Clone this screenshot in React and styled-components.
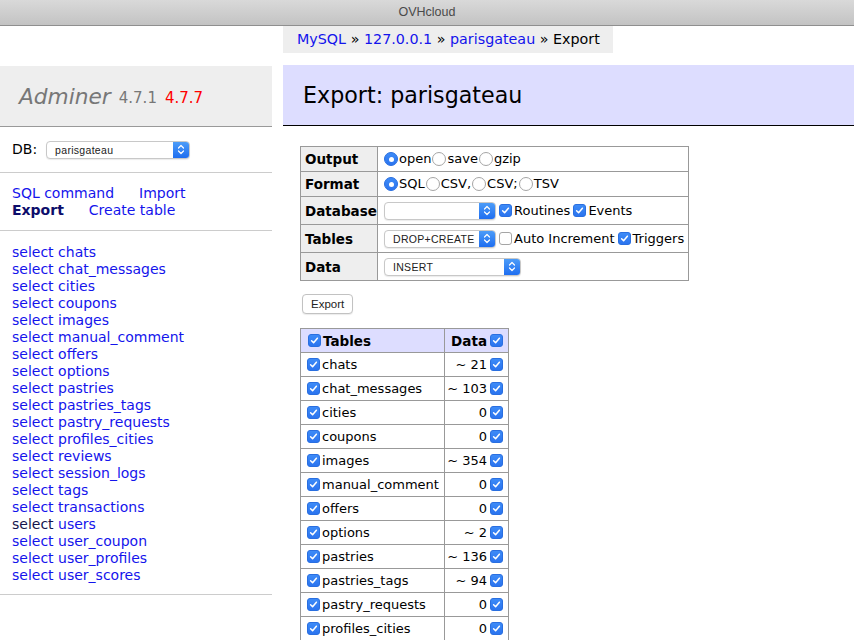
import React from "react";
import styled, { createGlobalStyle } from "styled-components";

const GlobalStyle = createGlobalStyle`
  html, body {
    margin: 0;
    padding: 0;
    background: #fff;
  }
  body {
    font-family: "DejaVu Sans", Verdana, sans-serif;
    font-size: 14px;
    line-height: 17px;
    color: #000;
    overflow: hidden;
  }
`;

const tables = [
  ["chats", "~ 21"],
  ["chat_messages", "~ 103"],
  ["cities", "0"],
  ["coupons", "0"],
  ["images", "~ 354"],
  ["manual_comment", "0"],
  ["offers", "0"],
  ["options", "~ 2"],
  ["pastries", "~ 136"],
  ["pastries_tags", "~ 94"],
  ["pastry_requests", "0"],
  ["profiles_cities", "0"],
  ["reviews", "~ 12"],
  ["session_logs", "~ 408"],
  ["tags", "~ 9"],
  ["transactions", "0"],
  ["users", "~ 31"],
  ["user_coupon", "0"],
  ["user_profiles", "~ 31"],
  ["user_scores", "0"],
];

const TitleBar = styled.div`
  height: 25px;
  border-bottom: 1px solid #8f8f8f;
  background: linear-gradient(#d9d9d9, #c3c3c3);
  display: flex;
  align-items: center;
  justify-content: center;
  font-family: "Liberation Sans", Arial, sans-serif;
  font-size: 12.5px;
  color: #4a4a4a;
`;

const Page = styled.div`
  display: flex;
  align-items: flex-start;
`;

const Menu = styled.div`
  width: 272px;
  flex-shrink: 0;
  padding-top: 40px;
`;

const Logo = styled.h1`
  margin: 0;
  height: 60px;
  padding: 0 0 0 19px;
  background: #eee;
  border-bottom: 1px solid #999;
  display: flex;
  align-items: center;
  font-weight: normal;
  color: #777;
  gap: 8px;
`;

const LogoName = styled.span`
  font-style: italic;
  font-size: 21.7px;
`;

const Version = styled.span`
  font-size: 15px;
  color: ${(p) => (p.$new ? "#f00" : "#777")};
  margin-top: 4px;
`;

const MenuBlock = styled.div`
  padding: ${(p) => p.$pad || "12px 12px 11px"};
  border-bottom: 1px solid #ccc;
`;

const DbRow = styled.div`
  display: flex;
  align-items: center;
  gap: 8px;
  height: 19px;
`;

const LinkRow = styled.div`
  display: flex;
  gap: ${(p) => p.$gap || "25px"};
`;

const Link = styled.a`
  color: ${(p) => (p.$active ? "#0d0d6b" : "#1414ec")};
  font-weight: ${(p) => (p.$active ? "bold" : "normal")};
  text-decoration: none;
  cursor: pointer;
`;

const Visited = styled.span`
  color: #15154d;
`;

const TableList = styled.ul`
  list-style: none;
  margin: 0;
  padding: 0;
`;

const Content = styled.div`
  margin-left: 11px;
  flex: 1;
`;

const Breadcrumb = styled.div`
  display: inline-block;
  background: #eee;
  height: 27px;
  line-height: 27px;
  padding: 0 13px 0 14px;
  font-size: 14.3px;
  white-space: nowrap;
`;

const Heading = styled.h2`
  margin: 12px 0 0;
  height: 60px;
  padding: 0 20px;
  display: flex;
  align-items: center;
  background: #ddf;
  border-bottom: 1px solid #000;
  font-weight: normal;
  font-size: 22.2px;
`;

const Body = styled.div`
  padding: 20px 0 0 17px;
`;

const Grid = styled.table`
  border-collapse: collapse;
  font-size: 13px;
  line-height: 16px;
  width: ${(p) => p.$width}px;
  table-layout: fixed;
`;

const Th = styled.th`
  border: 1px solid #999;
  background: ${(p) => p.$bg || "#eee"};
  text-align: ${(p) => p.$align || "left"};
  padding: 0 3px 0 4px;
  height: ${(p) => p.$h || 23}px;
  font-size: 13.5px;
  white-space: nowrap;
  box-sizing: border-box;
`;

const Td = styled.td`
  border: 1px solid #999;
  padding: 0 3px;
  height: ${(p) => p.$h || 23}px;
  text-align: ${(p) => p.$align || "left"};
  white-space: nowrap;
  font-size: 13px;
  box-sizing: border-box;
`;

const Inline = styled.div`
  display: flex;
  align-items: center;
  justify-content: ${(p) => (p.$right ? "flex-end" : "flex-start")};
`;

const Label = styled.label`
  display: inline-flex;
  align-items: center;
`;

const Box = styled.span`
  width: 13px;
  height: 13px;
  box-sizing: border-box;
  border-radius: 3px;
  margin: 0 2px 0 3px;
  display: inline-flex;
  align-items: center;
  justify-content: center;
  flex-shrink: 0;
  background: ${(p) => (p.$on ? "linear-gradient(#3d8bf7, #2b74ef)" : "#fff")};
  border: 1px solid ${(p) => (p.$on ? "#2a6fe0" : "#a5a5a5")};
`;

const Radio = styled.span`
  width: 14px;
  height: 14px;
  box-sizing: border-box;
  border-radius: 50%;
  margin: 0 1px 0 ${(p) => (p.$first ? 3 : 1)}px;
  display: inline-flex;
  align-items: center;
  justify-content: center;
  flex-shrink: 0;
  background: ${(p) => (p.$on ? "linear-gradient(#3d8bf7, #2b74ef)" : "#fff")};
  border: 1px solid ${(p) => (p.$on ? "#2a6fe0" : "#a5a5a5")};
  &::after {
    content: "";
    display: ${(p) => (p.$on ? "block" : "none")};
    width: 5px;
    height: 5px;
    border-radius: 50%;
    background: #fff;
  }
`;

const SelectBox = styled.span`
  display: inline-flex;
  width: ${(p) => p.$w}px;
  height: 18px;
  box-sizing: border-box;
  border: 1px solid #c8c8c8;
  border-radius: 4px;
  background: #fff;
  box-shadow: 0 1px 1px rgba(0, 0, 0, 0.08);
  font-family: "Liberation Sans", Arial, sans-serif;
  font-size: 10.5px;
  letter-spacing: 0.3px;
  color: #222;
  overflow: hidden;
  margin: ${(p) => p.$m || "0 0 0 3px"};
  flex-shrink: 0;
`;

const SelectText = styled.span`
  flex: 1;
  padding-left: 8px;
  line-height: 16px;
  white-space: nowrap;
  overflow: hidden;
`;

const SelectArrow = styled.span`
  width: 16px;
  flex-shrink: 0;
  background: linear-gradient(#4c9cf8, #1f6ef0);
  display: flex;
  align-items: center;
  justify-content: center;
`;

const Button = styled.button`
  display: block;
  margin: 13px 0 0 2px;
  height: 20px;
  padding: 0 8px;
  border: 1px solid #c2c2c2;
  border-radius: 4px;
  background: #fff;
  box-shadow: 0 1px 1px rgba(0, 0, 0, 0.08);
  font-family: "Liberation Sans", Arial, sans-serif;
  font-size: 11.5px;
  color: #222;
`;

const ListTable = styled(Grid)`
  margin-top: 14px;
`;

const Check = ({ on = true }) => (
  <Box $on={on}>
    {on && (
      <svg width="9" height="9" viewBox="0 0 9 9">
        <path d="M1.6 4.8 L3.6 6.8 L7.4 2.2" fill="none" stroke="#fff" strokeWidth="1.5" strokeLinecap="round" strokeLinejoin="round" />
      </svg>
    )}
  </Box>
);

const Select = ({ w, value, m }) => (
  <SelectBox $w={w} $m={m}>
    <SelectText>{value}</SelectText>
    <SelectArrow>
      <svg width="8" height="11" viewBox="0 0 8 11">
        <path d="M1.5 4 L4 1.5 L6.5 4 M1.5 7 L4 9.5 L6.5 7" fill="none" stroke="#fff" strokeWidth="1.2" strokeLinecap="round" strokeLinejoin="round" />
      </svg>
    </SelectArrow>
  </SelectBox>
);

const App = () => (
  <>
    <GlobalStyle />
    <TitleBar>OVHcloud</TitleBar>
    <Page>
      <Menu>
        <Logo>
          <LogoName>Adminer</LogoName>
          <Version>4.7.1</Version>
          <Version $new>4.7.7</Version>
        </Logo>
        <MenuBlock $pad="13px 12px 13px">
          <DbRow>
            DB: <Select w={144} value="parisgateau" m="0 0 0 1px" />
          </DbRow>
        </MenuBlock>
        <MenuBlock>
          <LinkRow $gap="25px">
            <Link>SQL command</Link>
            <Link>Import</Link>
          </LinkRow>
          <LinkRow $gap="25px">
            <Link $active>Export</Link>
            <Link>Create table</Link>
          </LinkRow>
        </MenuBlock>
        <MenuBlock $pad="13px 12px 10px">
          <TableList>
            {tables.map(([name]) => (
              <li key={name}>
                <Link>
                  {name === "users" ? <Visited>select</Visited> : "select"} {name}
                </Link>
              </li>
            ))}
          </TableList>
        </MenuBlock>
      </Menu>
      <Content>
        <Breadcrumb>
          <Link>MySQL</Link> » <Link>127.0.0.1</Link> » <Link>parisgateau</Link> » Export
        </Breadcrumb>
        <Heading>Export: parisgateau</Heading>
        <Body>
          <Grid $width={389}>
            <colgroup>
              <col style={{ width: 77 }} />
              <col />
            </colgroup>
            <tbody>
              <tr>
                <Th $h={25}>Output</Th>
                <Td $h={25}>
                  <Inline>
                    <Label><Radio $on $first />open</Label>
                    <Label><Radio />save</Label>
                    <Label><Radio />gzip</Label>
                  </Inline>
                </Td>
              </tr>
              <tr>
                <Th $h={25}>Format</Th>
                <Td $h={25}>
                  <Inline>
                    <Label><Radio $on $first />SQL</Label>
                    <Label><Radio />CSV,</Label>
                    <Label><Radio />CSV;</Label>
                    <Label><Radio />TSV</Label>
                  </Inline>
                </Td>
              </tr>
              <tr>
                <Th $h={28}>Database</Th>
                <Td $h={28}>
                  <Inline>
                    <Select w={112} value="" />
                    <Label><Check />Routines</Label>
                    <Label><Check />Events</Label>
                  </Inline>
                </Td>
              </tr>
              <tr>
                <Th $h={28}>Tables</Th>
                <Td $h={28}>
                  <Inline>
                    <Select w={112} value="DROP+CREATE" />
                    <Label><Check on={false} />Auto Increment</Label>
                    <Label><Check />Triggers</Label>
                  </Inline>
                </Td>
              </tr>
              <tr>
                <Th $h={28}>Data</Th>
                <Td $h={28}>
                  <Inline>
                    <Select w={137} value="INSERT" />
                  </Inline>
                </Td>
              </tr>
            </tbody>
          </Grid>
          <Button>Export</Button>
          <ListTable $width={209}>
            <colgroup>
              <col style={{ width: 144 }} />
              <col />
            </colgroup>
            <thead>
              <tr>
                <Th $bg="#ddf" $h={24}>
                  <Inline>
                    <Check />
                    Tables
                  </Inline>
                </Th>
                <Th $bg="#ddf" $h={24} $align="right">
                  <Inline $right>
                    Data
                    <Check />
                  </Inline>
                </Th>
              </tr>
            </thead>
            <tbody>
              {tables.map(([name, rows]) => (
                <tr key={name}>
                  <Td $h={24}>
                    <Inline>
                      <Check />
                      {name}
                    </Inline>
                  </Td>
                  <Td $h={24} $align="right">
                    <Inline $right>
                      {rows}
                      <Check />
                    </Inline>
                  </Td>
                </tr>
              ))}
            </tbody>
          </ListTable>
        </Body>
      </Content>
    </Page>
  </>
);

export default App;
